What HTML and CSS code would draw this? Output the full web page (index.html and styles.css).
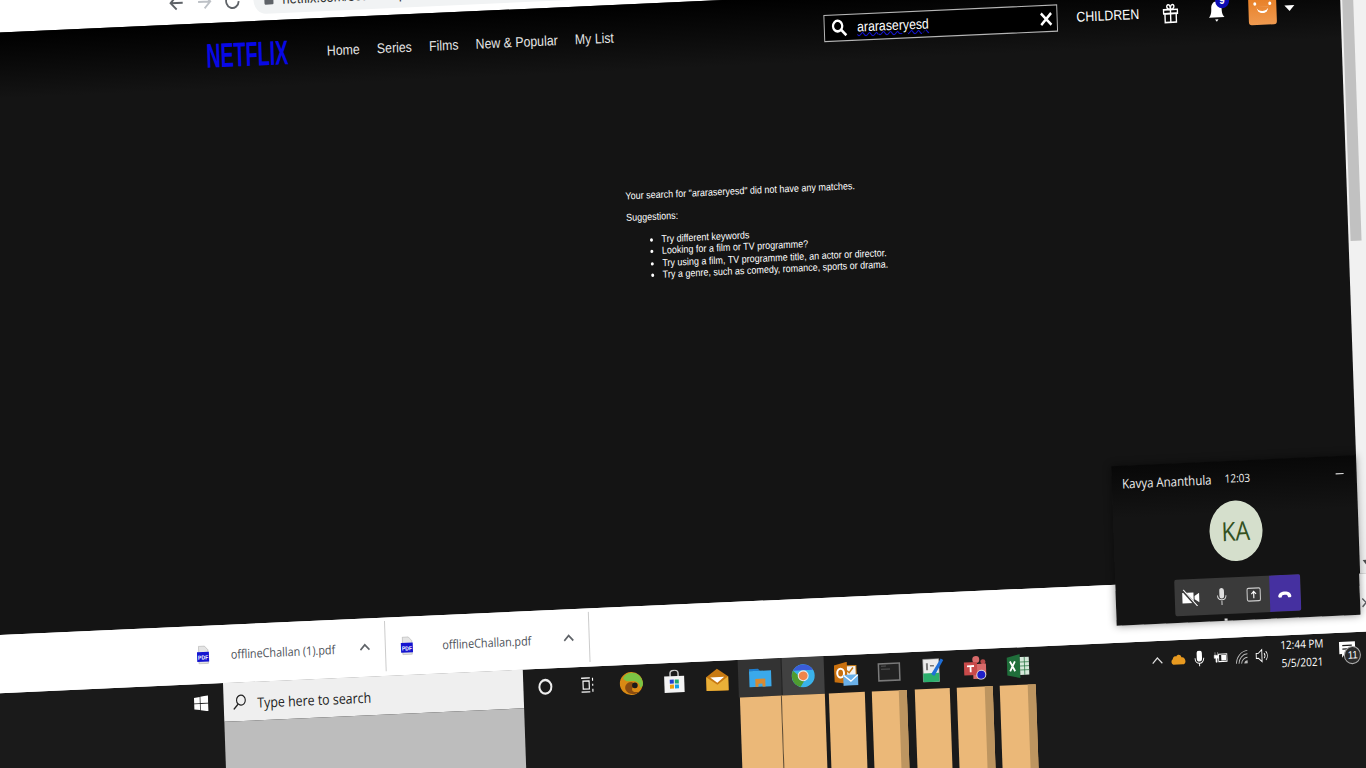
FILE: index.html
```html
<!DOCTYPE html>
<html lang="en">
<head>
    <meta charset="utf-8" />
    <title>Netflix search</title>
    <link rel="stylesheet" href="styles.css">
</head>
<body>

<div class="frame">

    <section class="toolbar">
        <svg class="tool" viewBox="0 0 20 20"><path d="M17 10H4M10 3.500L3.500 10l6.500 6.500" fill="none" stroke="#5f6368" stroke-width="2"/></svg>
        <svg class="tool" viewBox="0 0 20 20"><path d="M3 10h13M10 3.500l6.500 6.500-6.500 6.500" fill="none" stroke="#bdc1c6" stroke-width="2"/></svg>
        <svg class="tool" viewBox="0 0 20 20"><path d="M15 5.500A7 7 0 1 0 17 11" fill="none" stroke="#5f6368" stroke-width="2"/><path d="M17 2v6h-6z" fill="#5f6368"/></svg>
        <div class="address">
            <span class="lock"></span>
            <span class="url">netflix.com/search?q=araraseryesd</span>
        </div>
    </section>

    <section class="page">
        <div class="main">
            <header class="header">
                <div class="logo"><span>NETFLIX</span></div>
                <nav class="nav">
                    <a>Home</a>
                    <a>Series</a>
                    <a>Films</a>
                    <a>New &amp; Popular</a>
                    <a>My List</a>
                </nav>
                <div class="secondary">
                    <div class="searchbox">
                        <svg class="mag" viewBox="0 0 20 20"><circle cx="8" cy="8" r="5.800" fill="none" stroke="#fff" stroke-width="2.800"/><path d="M12.500 12.500l6 6" stroke="#fff" stroke-width="3.200"/></svg>
                        <span class="query">araraseryesd</span>
                        <svg class="clear" viewBox="0 0 14 14"><path d="M1.500 1.500l11 11M12.500 1.500l-11 11" stroke="#fff" stroke-width="2.600"/></svg>
                    </div>
                    <span class="children">CHILDREN</span>
                    <svg class="gift" viewBox="0 0 20 22"><g fill="none" stroke="#fff" stroke-width="1.600"><rect x="2" y="7" width="16" height="4"/><rect x="3.500" y="11" width="13" height="9"/><path d="M10 7v13M10 7C5 7 5 2 7.500 2S10 5 10 7c0-2 0-5 2.500-5S15 7 10 7"/></g></svg>
                    <div class="bell">
                        <svg viewBox="0 0 20 22"><path d="M10 1c4 0 6 3 6 7 0 5 1 7 3 9H1c2-2 3-4 3-9 0-4 2-7 6-7z" fill="#fff"/><path d="M8 19h4l-2 2.500z" fill="#fff"/></svg>
                        <span class="badge">9</span>
                    </div>
                    <div class="profile">
                        <span class="eye eye-left"></span>
                        <span class="eye eye-right"></span>
                        <span class="smile"></span>
                    </div>
                    <span class="caret"></span>
                </div>
            </header>

            <div class="results">
                <p>Your search for "araraseryesd" did not have any matches.</p>
                <p class="sugg">Suggestions:</p>
                <ul>
                    <li>Try different keywords</li>
                    <li>Looking for a film or TV programme?</li>
                    <li>Try using a film, TV programme title, an actor or director.</li>
                    <li>Try a genre, such as comedy, romance, sports or drama.</li>
                </ul>
            </div>
        </div>

        <div class="scrollbar">
            <div class="thumb"></div>
            <span class="scroll-down"></span>
        </div>
    </section>

    <section class="shelf">
        <div class="download">
            <svg class="pdf" viewBox="0 0 16 20"><path d="M3 1h7l4 4v14H3z" fill="#e4e4e4" stroke="#aaa" stroke-width=".6"/><rect x="1" y="7" width="14" height="10" fill="#1414d0"/><text x="8" y="14.800" text-anchor="middle" class="pdf-label">PDF</text></svg>
            <span class="filename">offlineChallan (1).pdf</span>
            <svg class="chev" viewBox="0 0 12 8"><path d="M1.500 6.500L6 2l4.500 4.500" fill="none" stroke="#5f6368" stroke-width="1.600"/></svg>
        </div>
        <div class="download">
            <svg class="pdf" viewBox="0 0 16 20"><path d="M3 1h7l4 4v14H3z" fill="#e4e4e4" stroke="#aaa" stroke-width=".6"/><rect x="1" y="7" width="14" height="10" fill="#1414d0"/><text x="8" y="14.800" text-anchor="middle" class="pdf-label">PDF</text></svg>
            <span class="filename">offlineChallan.pdf</span>
            <svg class="chev" viewBox="0 0 12 8"><path d="M1.500 6.500L6 2l4.500 4.500" fill="none" stroke="#5f6368" stroke-width="1.600"/></svg>
        </div>
        <svg class="shelf-close" viewBox="0 0 12 12"><path d="M2 2l8 8M10 2l-8 8" stroke="#5f6368" stroke-width="1.500"/></svg>
    </section>

    <section class="taskbar">
        <div class="start">
            <svg class="winlogo" viewBox="0 0 16 16"><path d="M0 2.300l6.500-.9v6.200H0zM7.300 1.300L16 0v7.600H7.300zM0 8.400h6.500v6.200L0 13.700zM7.300 8.400H16V16l-8.700-1.300z" fill="#fff"/></svg>
        </div>

        <div class="searchcol">
            <div class="searchbar">
                <svg class="ring" viewBox="0 0 16 16"><circle cx="9.500" cy="6.500" r="5" fill="none" stroke="#222" stroke-width="1.300"/><path d="M6 10.500L1 15.500" stroke="#222" stroke-width="1.500"/></svg>
                <span class="searchhint">Type here to search</span>
            </div>
            <div class="searchfill"></div>
        </div>

        <div class="apps">
            <div class="icons">
                <div class="cell"><span class="cortana"></span></div>
                <div class="cell">
                    <svg class="small" viewBox="0 0 16 16"><g fill="none" stroke="#fff" stroke-width="1.300"><path d="M0 1h10M0 15h10M2 4h7v8H2z"/><path d="M13 1v3M13 7v2M13 12v3"/></g></svg>
                </div>
                <div class="cell">
                    <svg class="app" viewBox="0 0 24 24" preserveAspectRatio="none"><circle cx="12" cy="12" r="11.500" fill="#d98a14"/><path d="M4 6C8-1 21-1 23.500 11c.5 3-.5 5-3 5.500C21 12 17 9 12 9.500 8 10 5 9 4 6z" fill="#7cc444"/><path d="M12 10.500c-5 0-7 4-6 7.500 2 5 9 6 14 2.500-5 1-8-.5-7.500-3 .3-1.500 1-2 2.500-2.500-.5-3-1.500-4.500-3-4.500z" fill="#8a4c10"/><circle cx="15.500" cy="14" r="2.800" fill="#1a1a1a"/></svg>
                </div>
                <div class="cell">
                    <svg class="app" viewBox="0 0 24 24" preserveAspectRatio="none"><path d="M8 7V3.500a4 3 0 0 1 8 0V7" fill="none" stroke="#c8c8c8" stroke-width="1.500"/><path d="M2 6.500h20V23H2z" fill="#f4f4f4"/><rect x="7.500" y="10" width="4" height="4" fill="#2040d0"/><rect x="12.500" y="10" width="4" height="4" fill="#20a870"/><rect x="7.500" y="15" width="4" height="4" fill="#e8a010"/><rect x="12.500" y="15" width="4" height="4" fill="#10a0e8"/></svg>
                </div>
                <div class="cell">
                    <svg class="app" viewBox="0 0 24 24" preserveAspectRatio="none"><path d="M1 9L12 1l11 8v14H1z" fill="#c87a12"/><path d="M5 9.500h14L12 15z" fill="#fff"/><path d="M1 9l11 8 11-8v14H1z" fill="#eab038"/></svg>
                </div>
                <div class="cell hi">
                    <svg class="app" viewBox="0 0 24 24" preserveAspectRatio="none"><path d="M1 3h9l2 2H1z" fill="#1f7fd0"/><path d="M1 5h22v16H1z" fill="#3ba9ea"/><path d="M7 13h10v8h-3v-3h-4v3H7z" fill="#d88a30"/></svg>
                </div>
                <div class="cell hi hi-on">
                    <svg class="app" viewBox="0 0 24 24" preserveAspectRatio="none"><circle cx="12" cy="12" r="11.500" fill="#3ab2ea"/><path d="M2 6.500A11.500 11.500 0 0 1 22 6.500H12z" fill="#3a5cd8"/><path d="M2 6.500A11.500 11.500 0 0 0 9 23l4-6z" fill="#4f9c30"/><circle cx="12" cy="12" r="5.500" fill="#e8e8e8"/><circle cx="12" cy="12" r="4.400" fill="#f0854a"/></svg>
                </div>
                <div class="cell">
                    <svg class="app" viewBox="0 0 24 24" preserveAspectRatio="none"><rect x="10" y="4" width="12" height="10" fill="#f4f4f4" stroke="#c87a12"/><path d="M13 9l2 2 4-5" fill="none" stroke="#c87a12" stroke-width="1.500"/><path d="M0 3l13-3v22L0 20z" fill="#c8700f"/><ellipse cx="6.500" cy="11" rx="3.400" ry="4.400" fill="none" stroke="#fff" stroke-width="2"/><path d="M9 13h15v11H9z" fill="#6ab0e8"/><path d="M9.500 13.500l7 6 7-6" fill="none" stroke="#fff" stroke-width="1.300"/></svg>
                </div>
                <div class="cell">
                    <svg class="app" viewBox="0 0 24 24" preserveAspectRatio="none"><rect x="1.500" y="3.500" width="21" height="17" fill="#222" stroke="#7a7a7a" stroke-width="1.500"/><path d="M4 6h5M4 9h9" stroke="#555" stroke-width="1"/></svg>
                </div>
                <div class="cell">
                    <svg class="app" viewBox="0 0 24 24" preserveAspectRatio="none"><path d="M3 1h16v23H3z" fill="#ececec" stroke="#999" stroke-width=".6"/><path d="M3 15h16v9H3z" fill="#2cae6c"/><path d="M6 5h2v7H6zM10 7h4v1.500h-4z" fill="#777"/><path d="M11 16L21 1l2.500 1.500L14 18z" fill="#1f6fd8"/></svg>
                </div>
                <div class="cell">
                    <svg class="app" viewBox="0 0 24 24" preserveAspectRatio="none"><circle cx="13" cy="3.500" r="3.500" fill="#d86a6a"/><circle cx="20" cy="6" r="2.500" fill="#b84a4a"/><path d="M10 8h13v11h-4v4h-9z" fill="#d86a6a"/><rect x="1" y="6" width="13" height="13" fill="#c84a4a"/><path d="M4 9h7v1.800H8.400V16H6.600v-5.200H4z" fill="#fff"/><circle cx="18" cy="19" r="4.500" fill="#2020c8" stroke="#ddd"/></svg>
                </div>
                <div class="cell">
                    <svg class="app" viewBox="0 0 24 24" preserveAspectRatio="none"><path d="M1 3l13-3v24L1 21z" fill="#1f6e3a"/><rect x="14" y="3" width="9" height="18" fill="#d5e8da"/><path d="M14 8h9M14 12h9M14 16h9M18.500 3v18" stroke="#1f6e3a" stroke-width=".7"/><path d="M4 7l5 10M9 7l-5 10" stroke="#fff" stroke-width="1.800"/></svg>
                </div>
            </div>
            <div class="bars">
                <div class="bar bar-a"></div>
                <div class="bar bar-b"></div>
                <div class="bar bar-c"></div>
                <div class="bar bar-d"></div>
                <div class="bar bar-c"></div>
                <div class="bar bar-d"></div>
                <div class="bar bar-d"></div>
            </div>
        </div>

        <div class="tray">
            <div class="tray-cell">
                <svg class="tray-icon" viewBox="0 0 16 16"><path d="M2.500 11L8 5.500l5.500 5.500" fill="none" stroke="#ddd" stroke-width="1.400"/></svg>
            </div>
            <div class="tray-cell">
                <svg class="tray-icon" viewBox="0 0 16 16"><path d="M2 13a3 3 0 0 1-.5-5.500C2 5 4 4 5.500 5 7 2.500 11 3 11.500 6c2.500-.5 4.500 1.500 4.500 4 0 2-1.500 3-3 3z" fill="#e89a20"/></svg>
            </div>
            <div class="tray-cell">
                <svg class="tray-icon" viewBox="0 0 16 16"><rect x="5" y="0" width="6" height="11" rx="3" fill="#fff"/><path d="M3 7.500c0 7 10 7 10 0M8 13v3" fill="none" stroke="#fff" stroke-width="1.100"/></svg>
            </div>
            <div class="tray-cell">
                <svg class="tray-icon" viewBox="0 0 16 16"><rect x="6" y="4.500" width="9.500" height="7.500" fill="none" stroke="#fff"/><rect x="9" y="5.500" width="5.500" height="5.500" fill="#fff"/><path d="M2 2.500v3M5 2.500v3M1 5.500h5v3H4.200v4H2.800v-4H1z" fill="#fff" stroke="#fff" stroke-width=".5"/></svg>
            </div>
            <div class="tray-cell">
                <svg class="tray-icon" viewBox="0 0 16 16"><g fill="none" stroke="#bbb" stroke-width="1"><path d="M2 15A14 14 0 0 1 15 2"/><path d="M5 15A10 10 0 0 1 15 5.500"/><path d="M8 15a7 7 0 0 1 7-6"/></g><path d="M11 15a4 4 0 0 1 4-3v3z" fill="#bbb"/></svg>
            </div>
            <div class="tray-cell">
                <svg class="tray-icon" viewBox="0 0 16 16"><path d="M1 5.500h2.500L7.500 2v12l-4-3.500H1z" fill="none" stroke="#fff"/><path d="M10 5.500a4 4 0 0 1 0 5M12 3.500a7 7 0 0 1 0 9" fill="none" stroke="#fff"/></svg>
            </div>
            <div class="clock">
                <span>12:44 PM</span>
                <span>5/5/2021</span>
            </div>
            <div class="notify">
                <svg viewBox="0 0 18 16"><path d="M1 1h15v10H6l-2.500 3v-3H1z" fill="#fff"/><path d="M4 4h9M4 7h9" stroke="#1a1a1a"/></svg>
                <span class="notify-count">11</span>
            </div>
        </div>
    </section>

    <aside class="call">
        <div class="call-head">
            <span class="call-name">Kavya Ananthula</span>
            <span class="call-time">12:03</span>
            <span class="call-min"></span>
        </div>
        <div class="call-avatar">KA</div>
        <div class="call-controls">
            <div class="ctl">
                <svg viewBox="0 0 20 16"><path d="M1 3h12v10H1zM14 6.500l5-3v9l-5-3z" fill="#fff"/><path d="M1 0l15 16" stroke="#3a3a3a" stroke-width="2.500"/><path d="M2 0l15 16" stroke="#fff" stroke-width="1"/></svg>
            </div>
            <div class="ctl">
                <svg viewBox="0 0 20 16"><rect x="7.500" y="0" width="5" height="10" rx="2.500" fill="#ddd"/><path d="M5.500 7c0 5.500 9 5.500 9 0M10 12v4" fill="none" stroke="#ddd" stroke-width="1"/></svg>
            </div>
            <div class="ctl">
                <svg viewBox="0 0 20 16"><rect x="3" y="1.500" width="14" height="12" rx="1.500" fill="none" stroke="#ccc" stroke-width="1.100"/><path d="M10 11V5M7.500 7L10 4.500 12.500 7" fill="none" stroke="#fff" stroke-width="1.200"/></svg>
            </div>
            <div class="ctl ctl-end">
                <svg viewBox="0 0 20 16"><path d="M3 10.500C3 4.500 17 4.500 17 10.500c0 1-1 1.200-3.500 1-.6-2.200-1-2.500-3.500-2.500s-2.900.3-3.500 2.500C4 11.700 3 11.500 3 10.500z" fill="#fff"/></svg>
            </div>
        </div>
    </aside>

</div>

</body>
</html>
```

FILE: styles.css
```css
html, body {
    margin: 0;
    height: 100%;
    overflow: hidden;
    background: #f1f1f1;
}

/* the whole desktop is a tilted photo, so everything hangs off this one box */
.frame {
    position: absolute;
    left: -20px;
    top: 0;
    width: 1406px;
    height: 768px;
    display: flex;
    flex-direction: column;
    background: #fff;
    font-family: "Liberation Sans", Arial, sans-serif;
    transform-origin: 703px 384px;
    transform: scale(1, 1.14) rotate(-2.262deg);
    overflow: hidden;
}

.toolbar {
    height: 49px;
    flex: none;
    box-sizing: border-box;
    padding: 11px 0 0 200px;
    display: flex;
    align-items: center;
    gap: 8px;
    background: #fff;
}
.tool {
    width: 20px;
    height: 18px;
}
.address {
    margin-left: 3px;
    width: 900px;
    height: 25px;
    border-radius: 13px;
    background: #f1f3f4;
    display: flex;
    align-items: center;
    padding-left: 11px;
    gap: 9px;
}
.lock {
    width: 9px;
    height: 9px;
    background: #5f6368;
    border-radius: 1px;
}
.url {
    font-size: 13px;
    color: #333;
}

.page {
    height: 528px;
    flex: none;
    display: flex;
    background: #141414;
}
.main {
    width: 1372.8px;
    flex: none;
}
.header {
    height: 58.1px;
    display: flex;
    align-items: center;
    padding-left: 237.7px;
    padding-right: 46px;
    box-sizing: border-box;
    background: linear-gradient(#000, #141414);
    color: #e5e5e5;
}
.logo {
    width: 82px;
    height: 24px;
    margin-right: 39px;
    flex: none;
}
.logo span {
    display: inline-block;
    font-size: 30px;
    line-height: 24px;
    font-weight: bold;
    color: #0808e6;
    transform-origin: left center;
    transform: scaleX(.656);
}
.nav {
    display: flex;
    gap: 17.3px;
    font-size: 12.3px;
}
.secondary {
    margin-left: auto;
    display: flex;
    align-items: center;
}
.searchbox {
    width: 234px;
    height: 23.4px;
    box-sizing: border-box;
    border: 1px solid #b5b5b5;
    background: #000;
    display: flex;
    align-items: center;
    padding-left: 5px;
}
.mag {
    width: 19px;
    height: 16px;
    flex: none;
}
.query {
    margin-left: 8px;
    font-size: 12.3px;
    color: #fff;
    text-decoration: underline wavy #1414c8 1px;
    text-underline-offset: 0;
}
.clear {
    margin-left: auto;
    margin-right: 3px;
    width: 15px;
    height: 13px;
}
.children {
    margin-left: 18.5px;
    width: 63px;
    font-size: 12.3px;
    color: #fff;
}
.gift {
    margin-left: 21px;
    width: 20px;
    height: 19px;
}
.bell {
    margin-left: 26px;
    width: 20px;
    height: 19px;
    position: relative;
}
.bell svg {
    width: 20px;
    height: 19px;
    display: block;
}
.badge {
    position: absolute;
    left: 9px;
    top: -7px;
    width: 14px;
    height: 14px;
    border-radius: 50%;
    background: #0c0cb4;
    color: #fff;
    font-size: 10px;
    font-weight: bold;
    line-height: 14px;
    text-align: center;
}
.profile {
    margin-left: 22.5px;
    width: 28px;
    height: 28px;
    border-radius: 3px;
    background: linear-gradient(#e67a1e, #ef9a50);
    position: relative;
}
.eye {
    position: absolute;
    top: 7.500px;
    width: 3px;
    height: 3px;
    border-radius: 50%;
    background: #fff;
}
.eye-left {
    left: 5px;
}
.eye-right {
    left: 20px;
}
.smile {
    position: absolute;
    left: 8px;
    top: 12px;
    width: 12px;
    height: 4px;
    border-bottom: 2px solid #fff;
    border-radius: 0 0 8px 8px;
}
.caret {
    margin-left: 7.5px;
    border-left: 5px solid transparent;
    border-right: 5px solid transparent;
    border-top: 5px solid #fff;
}

.results {
    margin: 105px 0 0 652px;
    color: #fff;
    font-size: 9px;
    line-height: 10.5px;
}
.results p {
    margin: 0;
}
.results .sugg {
    margin-top: 8.700px;
}
.results ul {
    margin: 9px 0 0;
    padding-left: 34.500px;
}

.scrollbar {
    flex: 1;
    display: flex;
    flex-direction: column;
    background: #f1f1f1;
    padding-left: 2.5px;
}
.thumb {
    width: 11px;
    height: 235.5px;
    background: #c1c1c1;
}
.scroll-down {
    margin-top: auto;
    margin-bottom: 7px;
    margin-left: 1px;
    width: 0;
    border-left: 4px solid transparent;
    border-right: 4px solid transparent;
    border-top: 5px solid #505050;
}

.shelf {
    height: 50.5px;
    flex: none;
    display: flex;
    align-items: center;
    padding-left: 193.3px;
    background: #fff;
    position: relative;
}
.download {
    width: 204px;
    height: 44px;
    box-sizing: border-box;
    border-right: 1px solid #ccc;
    display: flex;
    align-items: center;
    padding-left: 12.7px;
}
.pdf {
    width: 16px;
    height: 17px;
    flex: none;
}
.pdf-label {
    font-size: 6px;
    font-weight: bold;
    fill: #fff;
}
.filename {
    width: 144px;
    flex: none;
    text-align: center;
    font-family: "Open Sans", sans-serif;
    font-size: 10.8px;
    color: #4c5058;
    white-space: nowrap;
}
.chev {
    margin-left: 4px;
    width: 12px;
    height: 8px;
}
.shelf-close {
    position: absolute;
    left: 1372px;
    top: 20px;
    width: 12px;
    height: 11px;
}

.taskbar {
    flex: 1;
    min-height: 0;
    display: flex;
    background: #1a1a1a;
}
.start {
    width: 233px;
    flex: none;
    height: 34px;
    display: flex;
    align-items: center;
    box-sizing: border-box;
    padding-left: 202.5px;
}
.winlogo {
    width: 15px;
    height: 14px;
}
.searchcol {
    width: 300px;
    flex: none;
    display: flex;
    flex-direction: column;
}
.searchbar {
    height: 34px;
    background: #efefef;
    display: flex;
    align-items: center;
    padding-left: 8px;
    gap: 9.500px;
    font-family: "Open Sans", sans-serif;
    font-size: 12.4px;
    color: #222;
}
.searchhint {
    padding-top: 3px;
}
.ring {
    width: 16px;
    height: 14px;
    margin-top: 1px;
}
.searchfill {
    flex: 1;
    background: #bdbdbd;
}
.apps {
    width: 516px;
    flex: none;
}
.icons {
    height: 33.5px;
    display: flex;
}
.cell {
    width: 43px;
    flex: none;
    display: flex;
    align-items: center;
    justify-content: center;
}
.hi {
    background: #333;
}
.hi-on {
    background: #414141;
    border-left: 1px solid #222;
    box-sizing: border-box;
}
.app {
    width: 24px;
    height: 21px;
}
.small {
    width: 16px;
    height: 14px;
}
.cortana {
    width: 10px;
    height: 10px;
    border: 2px solid #eee;
    border-radius: 50%;
}
.bars {
    display: flex;
    padding-left: 216px;
    gap: 7.3px;
}
.bar {
    height: 100px;
    background: #ebb878;
}
.bar-a {
    width: 42px;
    margin-right: -7.3px;
    border-right: 1px solid #5a4a35;
    box-sizing: border-box;
}
.bar-b {
    width: 43px;
    margin-right: -3.300px;
}
.bar-c {
    width: 35.500px;
}
.bar-d {
    width: 27.500px;
    border-right: 8px solid #bd9560;
}

.tray {
    margin-left: 108.3px;
    height: 34px;
    display: flex;
    align-items: center;
    color: #fff;
}
.tray-cell {
    width: 21px;
    flex: none;
    display: flex;
    justify-content: center;
}
.tray-icon {
    width: 15px;
    height: 14px;
}
.clock {
    width: 58px;
    display: flex;
    flex-direction: column;
    align-items: center;
    gap: 3px;
    font-family: "Open Sans", sans-serif;
    font-size: 10px;
    line-height: 13px;
    white-space: nowrap;
}
.notify {
    margin-left: 7px;
    width: 24px;
    height: 20px;
    position: relative;
}
.notify svg {
    width: 20px;
    height: 17px;
    display: block;
}
.notify-count {
    position: absolute;
    left: 6px;
    top: 5px;
    width: 15px;
    height: 14px;
    border-radius: 50%;
    border: 1px solid #aaa;
    background: #2a2a2a;
    font-size: 9.500px;
    line-height: 14px;
    text-align: center;
}

/* floating teams call window */
.call {
    position: absolute;
    left: 1127.9px;
    top: 472.8px;
    width: 244.6px;
    height: 140.5px;
    background: linear-gradient(#080808, #141414 46px);
    box-shadow: 0 0 8px rgba(0, 0, 0, .45);
    color: #eee;
    font-family: "Open Sans", sans-serif;
}
.call::after {
    content: "";
    position: absolute;
    left: 108px;
    bottom: 0;
    width: 3px;
    height: 2px;
    background: #ddd;
}
.call-head {
    height: 31px;
    padding: 0 12px 0 10.4px;
    display: flex;
    align-items: center;
}
.call-name {
    font-size: 11.5px;
}
.call-time {
    margin-left: 13px;
    font-size: 10px;
}
.call-min {
    margin-left: auto;
    width: 8px;
    height: 1px;
    background: #ddd;
}
.call-avatar {
    margin: 4px auto 0;
    width: 53px;
    height: 53px;
    border-radius: 50%;
    background: #d5dfcc;
    color: #33511f;
    font-size: 23px;
    line-height: 53px;
    text-align: center;
}
.call-controls {
    margin: 14.400px auto 0;
    width: 126px;
    height: 32px;
    border-radius: 2px;
    background: #3a3a3a;
    display: flex;
    overflow: hidden;
}
.ctl {
    flex: 1;
    display: flex;
    align-items: center;
    justify-content: center;
}
.ctl svg {
    width: 20px;
    height: 15px;
}
.ctl-end {
    background: #4530a0;
}
```
